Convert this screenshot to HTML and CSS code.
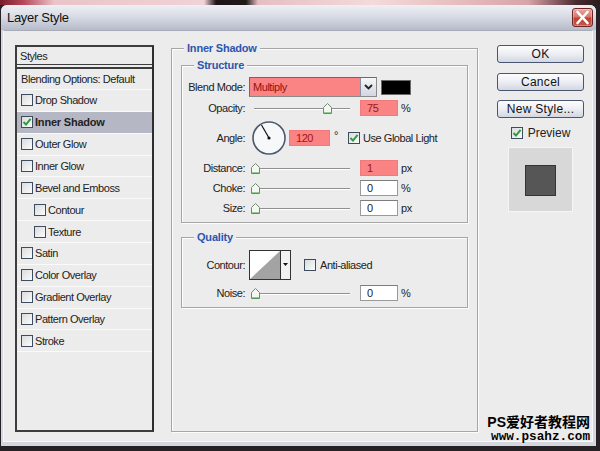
FILE: index.html
```html
<!DOCTYPE html>
<html>
<head>
<meta charset="utf-8">
<title>Layer Style</title>
<link rel="stylesheet" href="styles.css">
</head>
<body>
<div class="window">
  <div class="titlebar">
    <span class="title">Layer Style</span>
    <span class="close"><svg width="19" height="17" viewBox="0 0 19 17"><path d="M4.5 3 L14.5 14 M14.5 3 L4.5 14" stroke="#fff" stroke-width="2.6" stroke-linecap="round"/></svg></span>
  </div>
  <div class="client">
    <div class="styles-panel">
      <div class="srow head">Styles</div>
      <div class="srow blend">Blending Options: Default</div>
      <div class="srow"><span class="cb"></span>Drop Shadow</div>
      <div class="srow active"><span class="cb"><svg width="10" height="10" viewBox="0 0 10 10"><path d="M1.5 5 L4 7.6 L8.6 1.8" stroke="#2e9c3a" stroke-width="2" fill="none"/></svg></span>Inner Shadow</div>
      <div class="srow"><span class="cb"></span>Outer Glow</div>
      <div class="srow"><span class="cb"></span>Inner Glow</div>
      <div class="srow"><span class="cb"></span>Bevel and Emboss</div>
      <div class="srow sub"><span class="cb"></span>Contour</div>
      <div class="srow sub"><span class="cb"></span>Texture</div>
      <div class="srow"><span class="cb"></span>Satin</div>
      <div class="srow"><span class="cb"></span>Color Overlay</div>
      <div class="srow"><span class="cb"></span>Gradient Overlay</div>
      <div class="srow"><span class="cb"></span>Pattern Overlay</div>
      <div class="srow"><span class="cb"></span>Stroke</div>
    </div>

    <fieldset class="group outer">
      <legend>Inner Shadow</legend>
      <fieldset class="group structure">
        <legend>Structure</legend>
        <div class="frow r-blend">
          <span class="lbl">Blend Mode:</span>
          <div class="select"><span class="sel-text">Multiply</span><span class="sel-btn"><svg width="9" height="6" viewBox="0 0 9 6"><path d="M1 1 L4.5 4.5 L8 1" stroke="#222" stroke-width="1.8" fill="none"/></svg></span></div>
          <span class="swatch"></span>
        </div>
        <div class="frow r-field first">
          <span class="lbl">Opacity:</span>
          <div class="slider"><svg class="thumb" style="left:74px" width="9" height="11" viewBox="0 0 9 11"><path d="M0.5 4.5 L4.5 0.5 L8.5 4.5 V10.5 H0.5 Z" fill="#f3f6f1" stroke="#708a70"/><path d="M1 10 H8" stroke="#3aa03a"/></svg></div>
          <span class="inp hot">75</span><span class="unit">%</span>
        </div>
        <div class="frow r-angle">
          <span class="lbl">Angle:</span>
          <svg class="dial" width="34" height="36" viewBox="0 0 34 36"><circle cx="17" cy="18" r="16" fill="#f7f8fa" stroke="#4c5a6e" stroke-width="1.6"/><line x1="17" y1="18" x2="9.5" y2="5" stroke="#111" stroke-width="1.2"/><circle cx="17" cy="18" r="1.6" fill="#111"/></svg>
          <span class="inp hot wide">120</span><span class="deg">°</span>
          <span class="cb gl"><svg width="10" height="10" viewBox="0 0 10 10"><path d="M1.5 5 L4 7.6 L8.6 1.8" stroke="#2e9c3a" stroke-width="2" fill="none"/></svg></span><span class="cbl">Use Global Light</span>
        </div>
        <div class="frow r-field">
          <span class="lbl">Distance:</span>
          <div class="slider"><svg class="thumb" style="left:2px" width="9" height="11" viewBox="0 0 9 11"><path d="M0.5 4.5 L4.5 0.5 L8.5 4.5 V10.5 H0.5 Z" fill="#f3f6f1" stroke="#708a70"/><path d="M1 10 H8" stroke="#3aa03a"/></svg></div>
          <span class="inp hot">1</span><span class="unit">px</span>
        </div>
        <div class="frow r-field">
          <span class="lbl">Choke:</span>
          <div class="slider"><svg class="thumb" style="left:2px" width="9" height="11" viewBox="0 0 9 11"><path d="M0.5 4.5 L4.5 0.5 L8.5 4.5 V10.5 H0.5 Z" fill="#f3f6f1" stroke="#708a70"/><path d="M1 10 H8" stroke="#3aa03a"/></svg></div>
          <span class="inp">0</span><span class="unit">%</span>
        </div>
        <div class="frow r-field">
          <span class="lbl">Size:</span>
          <div class="slider"><svg class="thumb" style="left:2px" width="9" height="11" viewBox="0 0 9 11"><path d="M0.5 4.5 L4.5 0.5 L8.5 4.5 V10.5 H0.5 Z" fill="#f3f6f1" stroke="#708a70"/><path d="M1 10 H8" stroke="#3aa03a"/></svg></div>
          <span class="inp">0</span><span class="unit">px</span>
        </div>
      </fieldset>

      <fieldset class="group quality">
        <legend>Quality</legend>
        <div class="frow r-contour">
          <span class="lbl">Contour:</span>
          <svg class="contour" width="42" height="30" viewBox="0 0 42 30"><rect x="0.5" y="0.5" width="41" height="29" fill="#fff" stroke="#333"/><polygon points="1,29 31,1 31,29" fill="#a3a3a3"/><rect x="32" y="1" width="9" height="28" fill="#f2f2f2"/><line x1="31.5" y1="0" x2="31.5" y2="30" stroke="#333"/><polygon points="34,13 39,13 36.5,16" fill="#111"/></svg>
          <span class="cb aa"></span><span class="cbl aal">Anti-aliased</span>
        </div>
        <div class="frow r-field noise">
          <span class="lbl">Noise:</span>
          <div class="slider"><svg class="thumb" style="left:2px" width="9" height="11" viewBox="0 0 9 11"><path d="M0.5 4.5 L4.5 0.5 L8.5 4.5 V10.5 H0.5 Z" fill="#f3f6f1" stroke="#708a70"/><path d="M1 10 H8" stroke="#3aa03a"/></svg></div>
          <span class="inp">0</span><span class="unit">%</span>
        </div>
      </fieldset>
    </fieldset>

    <div class="actions">
      <button class="btn">OK</button>
      <button class="btn">Cancel</button>
      <button class="btn">New Style...</button>
      <div class="preview-toggle"><span class="cb"><svg width="10" height="10" viewBox="0 0 10 10"><path d="M1.5 5 L4 7.6 L8.6 1.8" stroke="#2e9c3a" stroke-width="2" fill="none"/></svg></span><span class="pv-text">Preview</span></div>
      <div class="preview"><div class="preview-square"></div></div>
    </div>
  </div>
  <div class="watermark">
    <div class="wm1">PS爱好者教程网</div>
    <div class="wm2">www.psahz.com</div>
  </div>
</div>
</body>
</html>
```

FILE: styles.css
```css
* { box-sizing: border-box; }
html, body { margin: 0; padding: 0; }
body {
  width: 600px;
  height: 451px;
  overflow: hidden;
  background-color: #272024;
  background-image: linear-gradient(to right, #7a1c2a 0, #b84a5a 4%, #e9c4c8 9%, #f1d2d6 34%, #1e1616 36%, #221a1a 41%, #e6bec2 43%, #f4dada 62%, #e8c0c0 75%, #d8a4a8 88%, #4a2a30 96%, #2a1c1c 100%);
  background-repeat: no-repeat;
  background-size: 100% 5px;
  font-family: "Liberation Sans", Arial, sans-serif;
  font-size: 11px;
  letter-spacing: -0.45px;
  color: #222;
}

.window {
  position: relative;
  margin: 5px 0 0 1px;
  width: 595px;
  height: 441px;
  display: flex;
  flex-direction: column;
  background: #d4d7e0;
  border-radius: 6px 6px 0 0;
  padding: 0 3px 4px 2px;
}

.titlebar {
  height: 25px;
  margin: 0 -3px 0 -2px;
  padding: 0 3px 0 6px;
  display: flex;
  align-items: center;
  justify-content: space-between;
  background: linear-gradient(#eef0f5, #d9dce5 45%, #c3c7d4 80%, #b7bccb);
  border-radius: 6px 6px 0 0;
}
.title {
  font-size: 13px;
  letter-spacing: -0.3px;
  color: #111;
}
.close {
  width: 21px;
  height: 19px;
  display: flex;
  align-items: center;
  justify-content: center;
  border: 1px solid #6c2424;
  border-radius: 3px;
  background: linear-gradient(#eaa79f, #d8776c 45%, #c2402f 55%, #c05a4e);
  box-shadow: inset 0 0 0 1px rgba(255, 255, 255, 0.3);
}

.client {
  flex: 1;
  display: flex;
  align-items: stretch;
  background: #ececec;
  border: 1px solid #f7f7f7;
  border-top-color: #a9acb6;
  padding: 0 0 9px 11px;
}

/* Styles list */
.styles-panel {
  width: 139px;
  margin-top: 14px;
  border: 2px solid #3d3d3d;
  border-right-color: #2e2e2e;
  display: flex;
  flex-direction: column;
}
.srow {
  height: 21.87px;
  flex: none;
  display: flex;
  align-items: center;
  padding-left: 4px;
  border-bottom: 1px solid #fafafa;
  white-space: nowrap;
}
.srow.head {
  height: 18px;
  padding-left: 3px;
  border-bottom: 1px solid #3d3d3d;
}
.srow.blend {
  height: 23px;
  margin-top: 2px;
  border-top: 2px solid #3d3d3d;
}
.srow.sub { padding-left: 17px; }
.srow.active {
  background: #b5b7c5;
  font-weight: bold;
  letter-spacing: -0.2px;
}

.cb {
  width: 12px;
  height: 12px;
  flex: none;
  border: 1px solid #3e4d5e;
  background: linear-gradient(135deg, #d9dbde, #fbfbfb);
  display: inline-flex;
  align-items: center;
  justify-content: center;
  margin-right: 2px;
}

/* Group boxes */
.group {
  margin: 0;
  min-width: 0;
  border: 1px solid #a6a6a6;
  box-shadow: inset 1px 1px 0 #fcfcfc, 1px 1px 0 #fcfcfc;
  padding: 5px 9px 6px 9px;
}
.group legend {
  margin-left: 3px;
  padding: 0 3px;
  font-weight: bold;
  font-size: 11px;
  line-height: 13px;
  letter-spacing: -0.2px;
  color: #2d56ae;
  background: #ececec;
}
.outer {
  width: 307px;
  margin: 11px 0 0 17px;
  padding: 4px 9px 0 9px;
}
.quality {
  margin-top: 8px;
  padding-top: 6px;
}

.frow {
  display: flex;
  align-items: center;
  height: 16px;
  margin-top: 4px;
  white-space: nowrap;
}
.frow.r-blend { height: 20px; margin-top: 0; }
.frow.first { margin-top: 3px; }
.frow.r-angle { height: 36px; }
.frow.r-contour { height: 30px; margin-top: 0; }
.frow.noise { margin-top: 5px; }

.lbl {
  width: 54px;
  flex: none;
  display: flex;
  justify-content: flex-end;
  white-space: nowrap;
  margin-right: 4px;
}

.select {
  width: 128px;
  height: 20px;
  display: flex;
  background: #fa8383;
  border: 1px solid #8a8a8a;
  border-top-color: #6a6a6a;
  border-left-color: #6a6a6a;
}
.sel-text {
  flex: 1;
  padding-left: 3px;
  display: flex;
  align-items: center;
  color: #8a1414;
}
.sel-btn {
  width: 16px;
  display: flex;
  align-items: center;
  justify-content: center;
  background: linear-gradient(#f6f7fa, #d2d6e0);
  border-left: 1px solid #8d90a0;
}
.swatch {
  width: 30px;
  height: 15px;
  margin-left: 4px;
  background: #000;
  border: 1px solid #6a6a6a;
}

.slider {
  position: relative;
  width: 107px;
  height: 16px;
  flex: none;
  background: linear-gradient(to bottom, transparent 8px, #909090 8px, #909090 9px, #ffffff 9px, #ffffff 10px, transparent 10px) no-repeat 5px 0 / 96px 100%;
}
.thumb {
  position: absolute;
  top: 3px;
}

.inp {
  width: 38px;
  height: 16px;
  margin-left: 4px;
  flex: none;
  display: flex;
  align-items: center;
  padding-left: 6px;
  background: #fff;
  border: 1px solid #9a9a9a;
  border-top-color: #7d7d7d;
}
.inp.hot {
  background: #fa8383;
  border-color: #f07a7a;
  color: #a01616;
}
.inp.wide { width: 41px; margin-left: 3px; }
.unit { margin-left: 3px; }
.dial { margin-left: 3px; flex: none; }
.deg { margin-left: 4px; margin-top: -6px; }
.cb.gl { margin-left: 10px; }
.cbl { margin-left: 1px; }
.contour { flex: none; }
.cb.aa { margin-left: 13px; }
.aal { margin-left: 2px; }

/* Buttons column */
.actions {
  width: 87px;
  margin: 14px 0 0 19px;
  display: flex;
  flex-direction: column;
  align-items: center;
  align-self: flex-start;
}
.btn {
  width: 87px;
  height: 18px;
  padding: 0;
  margin: 0 0 9.5px 0;
  border: 1px solid #4a5570;
  border-radius: 3px;
  background: linear-gradient(#fdfdfe, #eceef3 50%, #d3d7e2);
  font-family: "Liberation Sans", Arial, sans-serif;
  font-size: 12px;
  letter-spacing: 0.3px;
  color: #111;
  line-height: 16px;
}
.preview-toggle {
  margin-top: -0.5px;
  height: 12px;
  display: flex;
  align-items: center;
}
.pv-text {
  margin-left: 3px;
  font-size: 12px;
  letter-spacing: 0;
}
.preview {
  margin-top: 8px;
  width: 65px;
  height: 65px;
  background: #d8d8d8;
  border: 1px solid #f5f5f5;
  display: flex;
  align-items: center;
  justify-content: center;
}
.preview-square {
  width: 31px;
  height: 31px;
  margin-top: 2px;
  background: #565656;
  border: 1px solid #343434;
}

/* Watermark overlay */
.watermark {
  position: absolute;
  right: 6px;
  bottom: 3px;
  text-align: right;
  letter-spacing: 0;
  color: #000;
  font-weight: bold;
}
.wm1 {
  font-family: "Liberation Sans", "Noto Sans CJK SC", sans-serif;
  font-size: 14px;
  line-height: 15px;
}
.wm2 {
  font-family: "Liberation Mono", monospace;
  font-size: 12.7px;
  line-height: 13px;
  text-shadow: 0 0 1px #fff;
}
```
